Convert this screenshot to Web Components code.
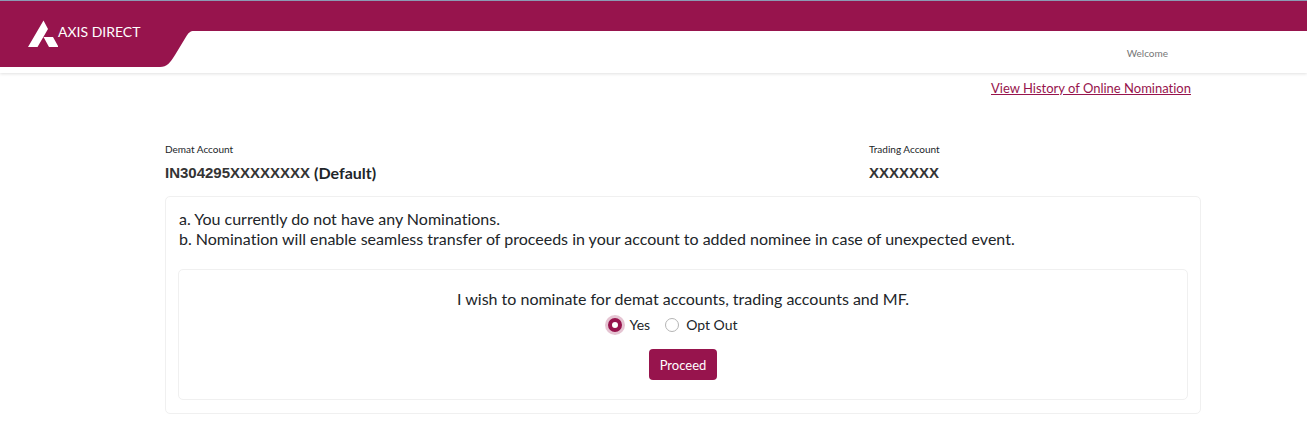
<!DOCTYPE html>
<html lang="en">
<head>
<meta charset="utf-8">
<title>Online Nomination</title>
<style>
  body { margin: 0; background: #fff; color: #212529; font: 16px/20px Lato, "Liberation Sans", sans-serif; font-variant-ligatures: none; --brand: #97144d; --line: #f0f0f0; }
</style>
</head>
<body>
<nomination-page></nomination-page>

<script>
const define = (name, html) => customElements.define(name, class extends HTMLElement {
  constructor() {
    super();
    this.attachShadow({ mode: 'open' }).innerHTML = html;
  }
});

define('brand-logo', `
<style>
  :host { display: grid; width: 194px; height: 66px; }
  svg, a { grid-area: 1 / 1; }
  .tab { fill: var(--brand); }
  a { display: flex; align-items: flex-start; padding: 19px 0 0 28px; color: #fff; text-decoration: none; font-size: 14px; line-height: 24px; }
</style>
<svg class="tab" width="194" height="66" viewBox="0 0 194 66" aria-hidden="true"><path d="M0 0H194V30C190 30 188.500 32 186.500 35L175 54C170 62 167 66 160 66H0Z"/></svg>
<a href="#">
  <svg width="30" height="28" viewBox="0 0 30 28" fill="#fff" aria-hidden="true"><path d="M15.500 0.500L20 9L9.500 27H0ZM15.500 17H25L30.500 27H21Z"/></svg>
  <span>AXIS DIRECT</span>
</a>`);

define('site-header', `
<style>
  :host { display: block; height: 72px; border-top: 1px solid #8b9bb4; background: linear-gradient(var(--brand) 30px, #fff 30px); box-shadow: 0 1px 3px #0000001f; }
  header { display: flex; justify-content: space-between; }
  .welcome { margin: 42px 139px 0 0; color: #777; font-size: 10px; line-height: 20px; }
</style>
<header><brand-logo></brand-logo><span class="welcome"><slot></slot></span></header>`);

define('account-field', `
<style>
  :host { display: block; }
  .label { font-size: 10px; line-height: 20px; }
  .value { display: flex; gap: 4px; margin-top: 4px; font-weight: 700; line-height: 20px; }
  .number { font-family: "Liberation Sans", Arial, sans-serif; font-size: 15px; color: #343434; }
</style>
<div class="label"><slot name="label"></slot></div>
<div class="value"><span class="number"><slot></slot></span><slot name="note"></slot></div>`);

define('outline-card', `
<style>
  :host { display: block; padding: 12px; border: 1px solid var(--line); border-radius: 5px; }
</style>
<slot></slot>`);

define('nomination-form', `
<style>
  :host { display: block; }
  form { display: flex; flex-direction: column; align-items: center; padding: 7px; }
  fieldset { display: contents; }
  legend { padding: 0; }
  .choices { display: flex; gap: 15px; margin: 6px 0 14px; padding-right: 20px; }
  label { display: flex; align-items: center; gap: 7px; font-size: 14px; line-height: 20px; }
  input { appearance: none; box-sizing: border-box; width: 14px; height: 14px; margin: 0; border: 1px solid #b5b5b5; border-radius: 50%; background: #fff; }
  input:checked { border: 4px solid var(--brand); box-shadow: 0 0 0 3px #97144d40; }
  button { height: 31px; padding: 0 11px; border: 0; border-radius: 4px; background: var(--brand); color: #fff; font: 13px/20px Lato, sans-serif; }
</style>
<form>
  <fieldset>
    <legend><slot></slot></legend>
    <div class="choices">
      <label><input type="radio" name="nominate" value="yes" checked>Yes</label>
      <label><input type="radio" name="nominate" value="out">Opt Out</label>
    </div>
  </fieldset>
  <button type="button">Proceed</button>
</form>`);

define('nomination-page', `
<style>
  :host { display: block; }
  main { display: block; padding: 5px 106px 8px 165px; }
  .history { margin-right: 10px; text-align: right; font-size: 13px; line-height: 20px; }
  .history a { color: var(--brand); }
  .accounts { display: grid; grid-template-columns: 704px 1fr; margin: 41px 0 13px; }
  p { margin: 0; }
  .notes { padding: 0 1px; }
  .inner { margin: 20px 0 1px; }
</style>
<site-header>Welcome</site-header>
<main>
  <div class="history"><a href="#">View History of Online Nomination</a></div>
  <div class="accounts">
    <account-field><span slot="label">Demat Account</span>IN304295XXXXXXXX<span slot="note">(Default)</span></account-field>
    <account-field><span slot="label">Trading Account</span>XXXXXXX</account-field>
  </div>
  <outline-card>
    <div class="notes">
      <p>a. You currently do not have any Nominations.</p>
      <p>b. Nomination will enable seamless transfer of proceeds in your account to added nominee in case of unexpected event.</p>
    </div>
    <outline-card class="inner">
      <nomination-form>I wish to nominate for demat accounts, trading accounts and MF.</nomination-form>
    </outline-card>
  </outline-card>
</main>`);
</script>
</body>
</html>
